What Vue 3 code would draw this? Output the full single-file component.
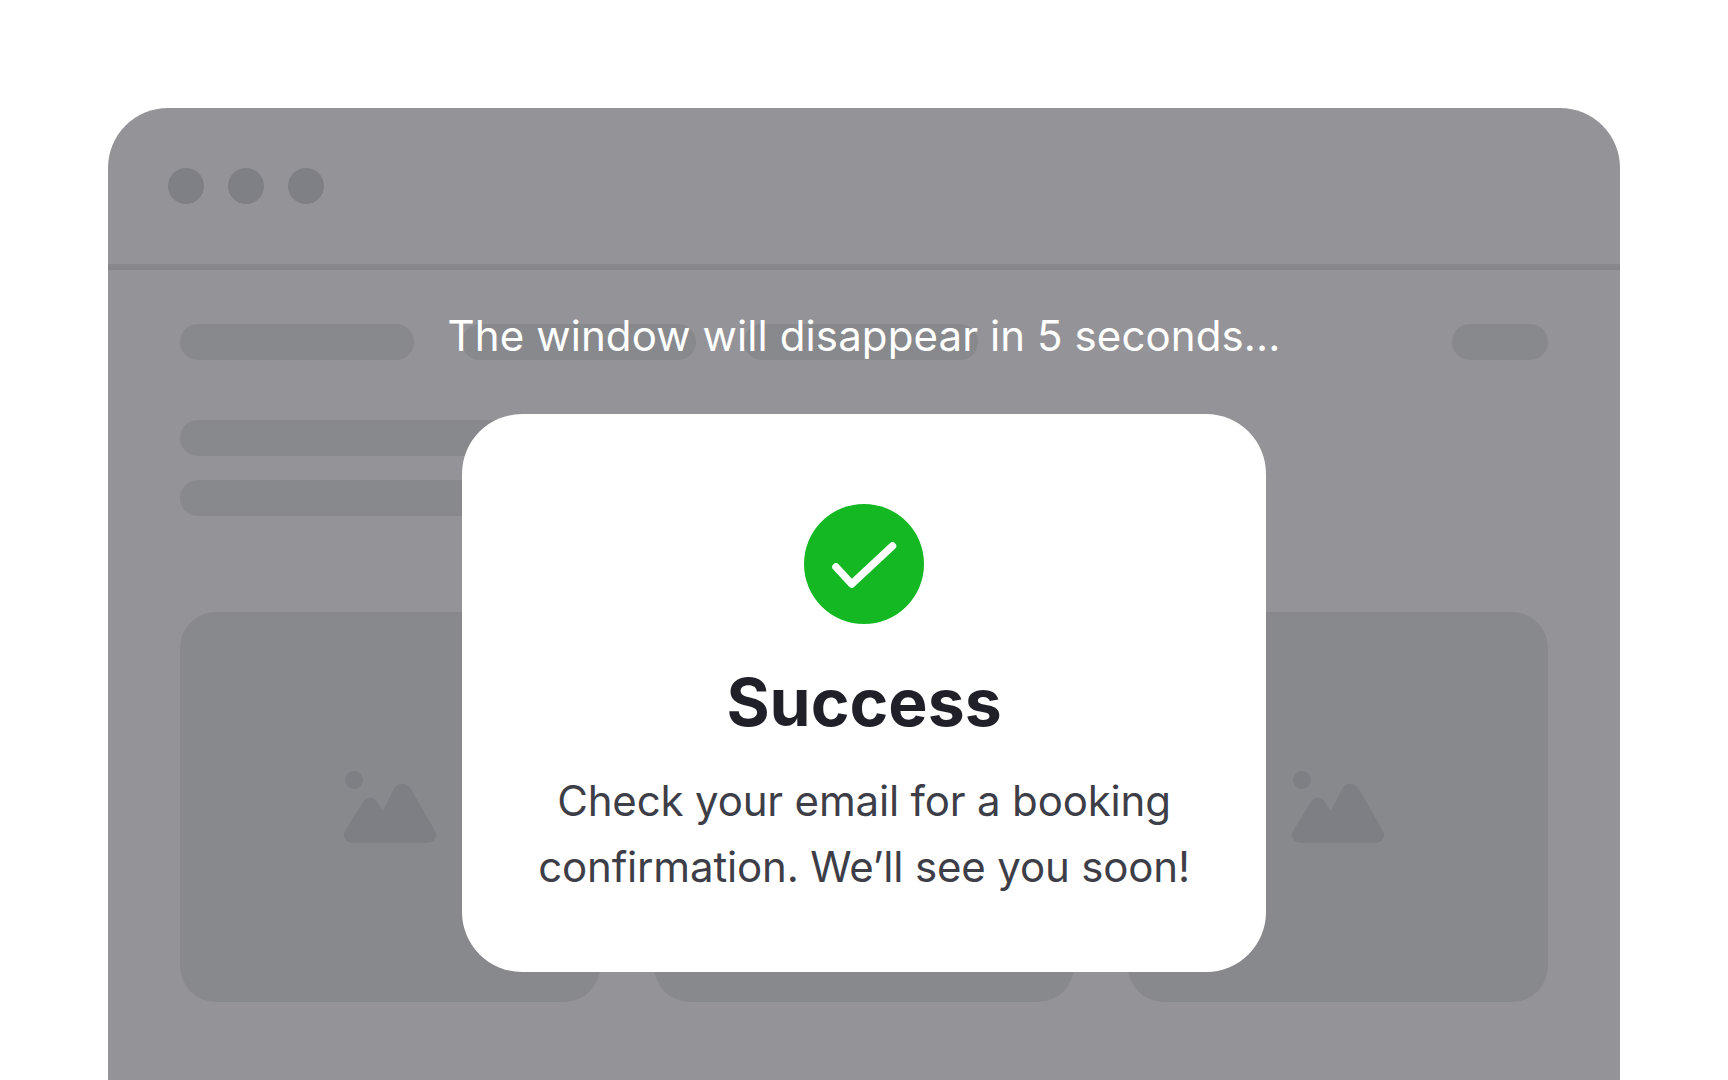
<script setup>
const cards = [1, 2, 3]
</script>

<template>
  <div class="page">
    <section class="window">
      <header class="titlebar">
        <span v-for="n in 3" :key="n" class="dot"></span>
      </header>
      <div class="content">
        <nav class="nav">
          <span class="pill wide"></span>
          <span class="pill wide"></span>
          <span class="pill wide"></span>
          <span class="pill small"></span>
        </nav>
        <div class="lines">
          <span class="pill line-a"></span>
          <span class="pill line-b"></span>
        </div>
        <div class="cards">
          <div v-for="c in cards" :key="c" class="card">
            <svg class="pic" width="92" height="72" viewBox="0 0 92 72">
              <circle cx="10" cy="9" r="9" />
              <path transform="translate(0 13)" d="M8 59H84C90 59 94 52 91 47L67 5C63-2 54-2 50 5L38.7 27 33 18C30 12 22 12 19 18L1 47C-2 52 2 59 8 59Z" />
            </svg>
          </div>
        </div>
      </div>
    </section>

    <p class="notice">The window will disappear in 5 seconds...</p>

    <div class="modal">
      <svg class="check" width="120" height="120" viewBox="0 0 120 120">
        <circle cx="60" cy="60" r="60" fill="#13b823" />
        <path d="M32 63 47.700 80 88.500 42" fill="none" stroke="#fff" stroke-width="7.500" stroke-linecap="round" stroke-linejoin="round" />
      </svg>
      <h1 class="title">Success</h1>
      <p class="body">Check your email for a booking<br />confirmation. We’ll see you soon!</p>
    </div>
  </div>
</template>

<style>
html, body {
  margin: 0;
  background: #fff;
  overflow: hidden;
}
</style>

<style scoped>
.page {
  position: relative;
  width: 1728px;
  height: 1080px;
  padding: 108px 108px 0;
  box-sizing: border-box;
  overflow: hidden;
  background: #fff;
  font-family: Inter, "Liberation Sans", sans-serif;
}
.window {
  height: 972px;
  background: #949398;
  border-radius: 60px 60px 0 0;
  display: flex;
  flex-direction: column;
}
.titlebar {
  height: 96px;
  box-sizing: content-box;
  border-bottom: 6px solid #87878c;
  display: flex;
  gap: 24px;
  padding-left: 60px;
  padding-top: 60px;
}
.dot {
  width: 36px;
  height: 36px;
  border-radius: 50%;
  background: #7f8085;
}
.content {
  padding: 54px 72px 0;
  display: flex;
  flex-direction: column;
}
.nav {
  display: flex;
  gap: 48px;
}
.pill {
  display: block;
  height: 36px;
  border-radius: 18px;
  background: #88898d;
}
.wide { width: 234px; }
.small { width: 96px; margin-left: auto; }
.lines {
  margin-top: 60px;
  display: flex;
  flex-direction: column;
  gap: 24px;
}
.line-a { width: 700px; }
.line-b { width: 600px; }
.cards {
  margin-top: 96px;
  display: flex;
  gap: 54px;
}
.card {
  width: 420px;
  height: 390px;
  border-radius: 36px;
  background: #88898d;
  display: flex;
  align-items: center;
  justify-content: center;
}
.pic { fill: #7e7f84; }
.notice {
  position: absolute;
  left: 0;
  right: 0;
  top: 310px;
  margin: 0;
  text-align: center;
  font-size: 42px;
  line-height: 52px;
  letter-spacing: 0.1px;
  color: #fff;
}
.modal {
  position: absolute;
  left: 462px;
  top: 414px;
  width: 804px;
  height: 558px;
  box-sizing: border-box;
  padding-top: 90px;
  background: #fff;
  border-radius: 60px;
  display: flex;
  flex-direction: column;
  align-items: center;
  text-align: center;
}
.check { display: block; }
.title {
  margin: 39px 0 0;
  font-size: 66px;
  line-height: 78px;
  font-weight: 700;
  color: #1f2028;
}
.body {
  margin: 27px 0 0;
  font-size: 42px;
  line-height: 66px;
  letter-spacing: -0.17px;
  color: #3d3e47;
}
</style>
